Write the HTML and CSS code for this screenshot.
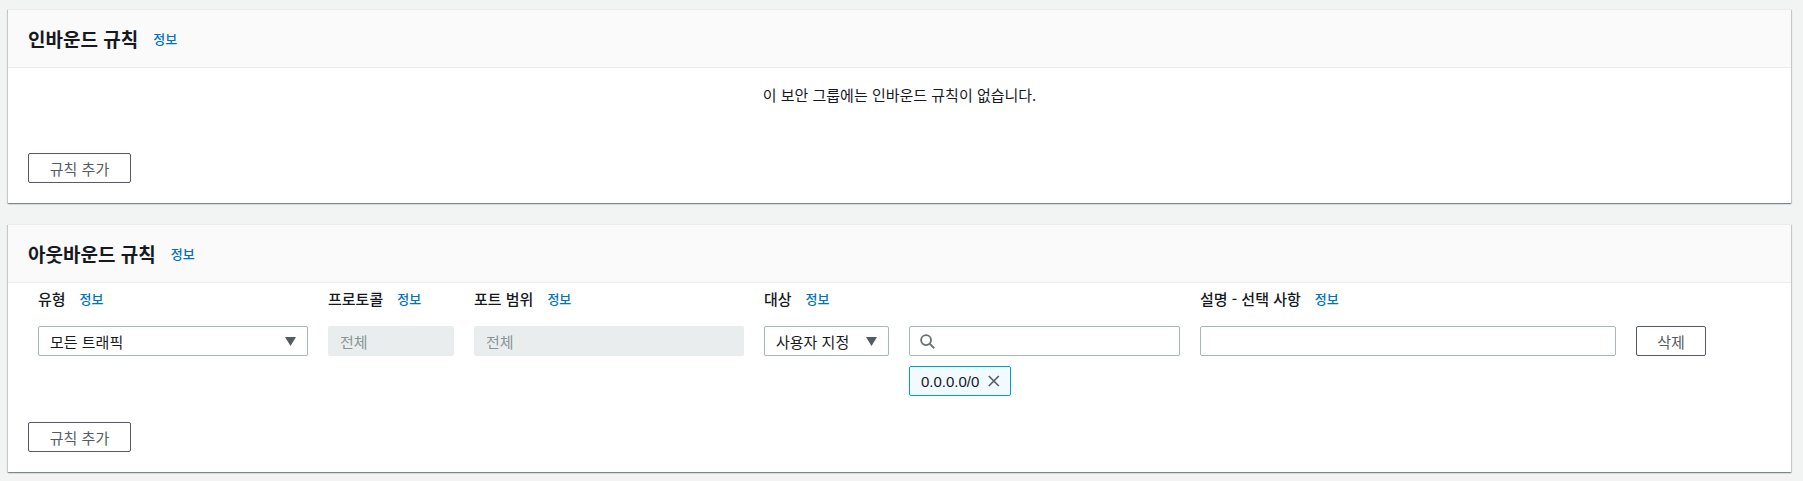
FILE: index.html
```html
<!DOCTYPE html>
<html lang="ko">
<head>
  <meta charset="utf-8">
  <title>보안 그룹 규칙</title>
  <link rel="stylesheet" href="styles.css">
</head>
<body>
  <section class="card">
    <header class="card-header">
      <h2>인바운드 규칙</h2>
      <a class="info" href="#">정보</a>
    </header>
    <div class="card-body">
      <p class="empty">이 보안 그룹에는 인바운드 규칙이 없습니다.</p>
      <button class="btn btn-add">규칙 추가</button>
    </div>
  </section>

  <section class="card">
    <header class="card-header">
      <h2>아웃바운드 규칙</h2>
      <a class="info" href="#">정보</a>
    </header>
    <div class="card-body card-body-rules">
      <div class="rule-grid">
        <div class="label">유형 <a class="info" href="#">정보</a></div>
        <div class="label">프로토콜 <a class="info" href="#">정보</a></div>
        <div class="label">포트 범위 <a class="info" href="#">정보</a></div>
        <div class="label">대상 <a class="info" href="#">정보</a></div>
        <div></div>
        <div class="label">설명 - 선택 사항 <a class="info" href="#">정보</a></div>
        <div></div>

        <div class="select">
          <span>모든 트래픽</span>
          <svg class="caret" viewBox="0 0 10 8"><path d="M0 0h10L5 8z"/></svg>
        </div>
        <div class="input input-disabled">전체</div>
        <div class="input input-disabled">전체</div>
        <div class="select">
          <span>사용자 지정</span>
          <svg class="caret" viewBox="0 0 10 8"><path d="M0 0h10L5 8z"/></svg>
        </div>
        <div class="target">
          <div class="input input-search">
            <svg class="search" viewBox="0 0 16 16"><circle cx="6.5" cy="6.5" r="5.3"/><path d="M10.3 10.3L15.2 15.2"/></svg>
          </div>
          <div class="token">
            <span>0.0.0.0/0</span>
            <svg class="close" viewBox="0 0 14 14"><path d="M1 1l12 12M13 1L1 13"/></svg>
          </div>
        </div>
        <div class="input"></div>
        <button class="btn">삭제</button>
      </div>
      <button class="btn btn-add">규칙 추가</button>
    </div>
  </section>
</body>
</html>
```

FILE: styles.css
```css
body {
  margin: 0;
  padding: 9px 12px 10px 8px;
  background-color: #f2f3f3;
  font-family: "Noto Sans CJK KR", "Liberation Sans", sans-serif;
  font-size: 15px;
  color: #16191f;
}

.card {
  background-color: #fff;
  border-top: 1px solid #eaeded;
  box-shadow: 0 1px 1px 0 rgba(0, 28, 36, .3), 1px 1px 1px 0 rgba(0, 28, 36, .15), -1px 1px 1px 0 rgba(0, 28, 36, .15);
}
.card + .card {
  margin-top: 21px;
}

.card-header {
  display: flex;
  align-items: center;
  height: 57px;
  padding-left: 20px;
  background-color: #fafafa;
  border-bottom: 1px solid #eaeded;
}
.card-header h2 {
  margin: 0 15px 0 0;
  font-size: 19px;
  font-weight: 700;
  line-height: 24px;
}

.info {
  font-size: 13px;
  font-weight: 500;
  color: #0073bb;
  text-decoration: none;
}

.card-body {
  padding: 0 20px 20px;
}
.card-body-rules {
  padding-top: 4px;
}

.empty {
  margin: 0;
  padding-top: 17px;
  height: 68px;
  text-align: center;
  line-height: 20px;
}

.btn {
  display: block;
  padding: 0;
  height: 30px;
  background-color: #fff;
  border: 1px solid #545b64;
  border-radius: 2px;
  color: #545b64;
  font-family: inherit;
  font-size: 15px;
}
.btn-add {
  width: 103px;
}

.rule-grid {
  display: grid;
  grid-template-columns: 270px 126px 270px 125px 271px 416px 70px;
  grid-template-rows: 24px auto;
  column-gap: 20px;
  row-gap: 15px;
  margin: 0 0 26px 10px;
}

.label {
  display: flex;
  align-items: center;
  gap: 14px;
  font-weight: 500;
  line-height: 24px;
}

.select,
.input {
  display: flex;
  align-items: center;
  box-sizing: border-box;
  height: 30px;
  padding: 0 11px;
  background-color: #fff;
  border: 1px solid #aab7b8;
  border-radius: 2px;
}
.select {
  justify-content: space-between;
}
.input-disabled {
  background-color: #eaeded;
  border-color: #eaeded;
  color: #879596;
}

.caret {
  width: 11px;
  height: 9px;
  fill: #545b64;
}

.search {
  width: 15px;
  height: 15px;
  fill: none;
  stroke: #687078;
  stroke-width: 2;
}

.target {
  display: flex;
  flex-direction: column;
  align-items: flex-start;
  gap: 10px;
  height: 70px;
}
.input-search {
  width: 100%;
  padding-left: 10px;
}

.token {
  display: flex;
  align-items: center;
  gap: 9px;
  box-sizing: border-box;
  width: 102px;
  height: 30px;
  padding: 0 10px 0 11px;
  background-color: #f1faff;
  border: 1px solid #00a1c9;
  border-radius: 2px;
  font-family: "Liberation Sans", sans-serif;
  font-size: 15px;
}
.close {
  width: 14px;
  height: 14px;
  fill: none;
  stroke: #545b64;
  stroke-width: 2;
}
```
